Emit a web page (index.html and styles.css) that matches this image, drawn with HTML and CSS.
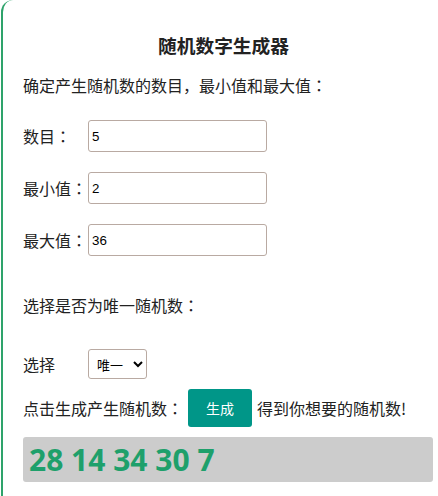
FILE: index.html
```html
<!DOCTYPE html>
<html lang="zh-CN">
<head>
    <meta charset="UTF-8">
    <meta name="viewport" content="width=device-width, initial-scale=1.0">
    <title>随机数字生成器</title>
    <link rel="stylesheet" href="styles.css">
</head>
<body>
    <div class="panel">
        <h3 class="title">随机数字生成器</h3>
        <p class="intro">确定产生随机数的数目，最小值和最大值<span class="colon" lang="zh-TW">：</span></p>
        <div class="row">
            <label class="label" for="count">数目<span class="colon" lang="zh-TW">：</span></label>
            <input class="field" type="text" id="count" value="5">
        </div>
        <div class="row">
            <label class="label" for="min">最小值<span class="colon" lang="zh-TW">：</span></label>
            <input class="field" type="text" id="min" value="2">
        </div>
        <div class="row">
            <label class="label" for="max">最大值<span class="colon" lang="zh-TW">：</span></label>
            <input class="field" type="text" id="max" value="36">
        </div>
        <p class="unique">选择是否为唯一随机数<span class="colon" lang="zh-TW">：</span></p>
        <div class="row select-row">
            <label class="label" for="mode">选择</label>
            <select class="choice" id="mode">
                <option>唯一</option>
                <option>可重复</option>
            </select>
        </div>
        <div class="row action-row">
            <span>点击生成产生随机数<span class="colon" lang="zh-TW">：</span></span>
            <button class="gen" type="button">生成</button>
            <span>得到你想要的随机数!</span>
        </div>
        <div class="result">28 14 34 30 7</div>
    </div>
</body>
</html>
```

FILE: styles.css
```css
body {
    margin: 0;
    overflow: hidden;
    background-color: white;
    color: #222;
    font-family: "Noto Sans CJK SC", "Noto Sans", sans-serif;
    font-size: 16px;
}
.panel {
    box-sizing: border-box;
    width: 437px;
    height: 496px;
    margin-left: 1px;
    padding: 33px 5px 0 20px;
    border-left: 2px solid #2ea36b;
    border-top-left-radius: 12px;
}
.colon {
    font-family: "Noto Sans CJK TC", sans-serif;
}
.title {
    margin: 0 9px 16px 0;
    font-size: 18.72px;
    line-height: 24px;
    text-align: center;
}
.intro,
.unique {
    margin: 0;
    line-height: 24px;
}
.intro {
    margin-bottom: 23px;
}
.row {
    display: flex;
    align-items: center;
    height: 32px;
    margin-bottom: 20px;
}
.label {
    width: 65px;
    flex-shrink: 0;
}
.field {
    box-sizing: border-box;
    width: 179px;
    height: 32px;
    padding: 0 3px;
    border: 1px solid #b9aaa2;
    border-radius: 3px;
    font-family: "Liberation Sans", Arial, sans-serif;
    font-size: 13.33px;
    color: #000;
}
.unique {
    margin-top: 37px;
}
.select-row {
    height: 30px;
    margin-top: 32px;
    margin-bottom: 10px;
}
.choice {
    box-sizing: border-box;
    width: 59px;
    height: 30px;
    padding-left: 4px;
    border: 1px solid #b9aaa2;
    border-radius: 3px;
    background-color: white;
    font-family: "Noto Sans CJK SC", sans-serif;
    font-size: 13px;
    color: #000;
}
.action-row {
    height: 38px;
    margin-bottom: 10px;
    gap: 5px;
}
.gen {
    width: 64px;
    height: 38px;
    border: none;
    border-radius: 3px;
    background-color: #009688;
    color: white;
    font-family: "Noto Sans CJK SC", sans-serif;
    font-size: 14px;
}
.result {
    box-sizing: border-box;
    height: 45px;
    padding-left: 6px;
    border-radius: 3px;
    background-color: #cccccc;
    color: #1ea06b;
    font-family: "Open Sans", sans-serif;
    font-weight: bold;
    font-size: 30px;
    line-height: 45px;
}
```
